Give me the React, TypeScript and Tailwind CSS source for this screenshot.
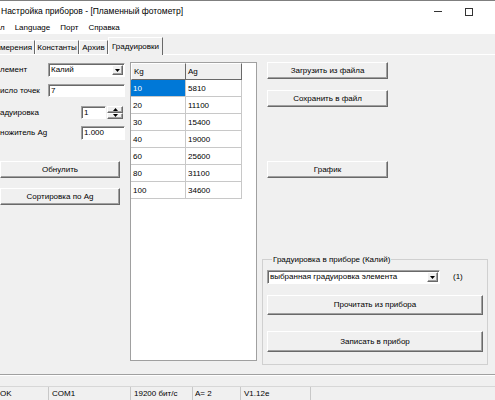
import React from "react";

const sunken =
  "bg-white border border-t-[#a0a0a0] border-l-[#a0a0a0] border-b-white border-r-white shadow-[inset_1px_1px_0_#696969]";
const raised =
  "bg-[#f0f0f0] border border-t-white border-l-white border-b-[#696969] border-r-[#696969] shadow-[inset_-1px_-1px_0_#a0a0a0]";

const rows: [string, string][] = [
  ["10", "5810"],
  ["20", "11100"],
  ["30", "15400"],
  ["40", "19000"],
  ["60", "25600"],
  ["80", "31100"],
  ["100", "34600"],
];

function Arrow({ up = false }: { up?: boolean }) {
  return (
    <svg width="5" height="3" viewBox="0 0 5 3" className={up ? "rotate-180" : ""}>
      <polygon points="0,0 5,0 2.5,3" fill="#000" />
    </svg>
  );
}

function Combo({ value, className }: { value: string; className: string }) {
  return (
    <div className={`flex items-center ${sunken} ${className}`}>
      <span className="min-w-0 flex-1 truncate pl-[2px] leading-none">{value}</span>
      <span className={`mr-[1px] flex h-[10px] w-[11px] items-center justify-center ${raised}`}>
        <Arrow />
      </span>
    </div>
  );
}

function Field({ value, className }: { value: string; className: string }) {
  return (
    <div className={`flex items-center pl-[2px] leading-none ${sunken} ${className}`}>{value}</div>
  );
}

function Btn({ children, className }: { children: React.ReactNode; className: string }) {
  return (
    <button type="button" className={`flex items-center justify-center leading-none ${raised} ${className}`}>
      {children}
    </button>
  );
}

function Tab({ label, w, active = false }: { label: string; w: string; active?: boolean }) {
  return (
    <div
      className={`flex items-center justify-center whitespace-nowrap border-t border-l border-r border-t-white border-l-white border-r-[#696969] ${w} ${
        active ? "relative z-10 -mb-px h-[18px] bg-[#f0f0f0]" : "h-[14px]"
      }`}
    >
      {label}
    </div>
  );
}

export default function App() {
  return (
    <div className="flex h-[400px] w-[495px] flex-col overflow-hidden bg-[#f0f0f0] font-['Liberation_Sans',Arial,sans-serif] text-[8px] text-black">
      {/* title bar */}
      <div className="flex h-[22px] shrink-0 items-center border-t border-[#7f7f7f] bg-white">
        <span className="pl-[1px] text-[8.5px] leading-none">Настройка приборов - [Пламенный фотометр]</span>
        <div className="ml-auto mr-[22px] flex items-center gap-[23px]">
          <div className="h-px w-[8px] bg-[#333]" />
          <div className="h-[8px] w-[8px] border border-[#333]" />
        </div>
      </div>

      {/* menu (window is cut on the left, so only the visible tail of "Файл" shows) */}
      <div className="flex h-[12px] shrink-0 items-center gap-[10px] bg-white leading-none">
        <span>л</span>
        <span>Language</span>
        <span>Порт</span>
        <span>Справка</span>
      </div>

      {/* tabs */}
      <div className="flex h-[21px] shrink-0 items-end border-b border-white">
        <div className="flex h-[14px] w-[35px] items-center justify-end whitespace-nowrap border-t border-r border-t-white border-r-[#696969] pr-[2px]">
          мерения
        </div>
        <Tab label="Константы" w="w-[44px]" />
        <Tab label="Архив" w="w-[29px]" />
        <Tab label="Градуировки" w="w-[55px]" active />
      </div>

      {/* page */}
      <div className="flex h-[319px] shrink-0">
        <div className="flex w-[125px] shrink-0 flex-col">
          <div className="mt-[8px] flex h-[14px] items-center">
            <span className="flex-1 whitespace-nowrap">лемент</span>
            <Combo value="Калий" className="h-[14px] w-[77px]" />
          </div>
          <div className="mt-[7px] flex h-[13px] items-center">
            <span className="flex-1 whitespace-nowrap">исло точек</span>
            <Field value="7" className="h-[13px] w-[77px]" />
          </div>
          <div className="mt-[9px] flex h-[13px] items-center">
            <span className="flex-1 whitespace-nowrap">адуировка</span>
            <Field value="1" className="h-[13px] w-[25px]" />
            <div className="ml-[1px] mr-[2px] flex h-[13px] w-[16px] flex-col">
              <div className={`flex flex-1 items-center justify-center ${raised}`}>
                <Arrow up />
              </div>
              <div className={`flex flex-1 items-center justify-center ${raised}`}>
                <Arrow />
              </div>
            </div>
          </div>
          <div className="mt-[7px] flex h-[14px] items-center">
            <span className="flex-1 whitespace-nowrap">ножитель Ag</span>
            <Field value="1.000" className="h-[14px] w-[44px]" />
          </div>
          <Btn className="mt-[21px] h-[17px] w-[120px]">Обнулить</Btn>
          <Btn className="mt-[10px] h-[17px] w-[120px]">Сортировка по Ag</Btn>
        </div>

        {/* grid */}
        <div className="ml-[5px] mt-[7px] h-[299px] w-[127px] shrink-0 border border-[#a0a0a0] bg-white">
          <div className="flex h-[17px]">
            <div className="w-[55px] border-t border-l border-r border-b border-t-white border-l-white border-r-[#696969] border-b-[#696969] bg-[#f0f0f0] pl-[2px] pt-[2px]">
              Kg
            </div>
            <div className="w-[56px] border-t border-r border-b border-t-white border-r-[#696969] border-b-[#696969] bg-[#f0f0f0] pl-[2px] pt-[2px]">
              Ag
            </div>
          </div>
          {rows.map(([kg, ag], i) => (
            <div key={kg} className="flex h-[17px]">
              <div
                className={`w-[55px] border-r border-b border-[#c8c8c8] pl-[2px] pt-[3px] ${
                  i === 0 ? "bg-[#0078d7] text-white" : ""
                }`}
              >
                {kg}
              </div>
              <div className="w-[56px] border-r border-b border-[#c8c8c8] pl-[2px] pt-[3px]">{ag}</div>
            </div>
          ))}
        </div>

        {/* right side */}
        <div className="ml-[5px] flex w-[225px] shrink-0 flex-col">
          <Btn className="ml-[5px] mt-[7px] h-[17px] w-[121px]">Загрузить из файла</Btn>
          <Btn className="ml-[5px] mt-[11px] h-[17px] w-[121px]">Сохранить в файл</Btn>
          <Btn className="ml-[5px] mt-[54px] h-[17px] w-[121px]">График</Btn>

          <fieldset className="mt-[77px] h-[110px] border border-[#d0d0d0] px-[4px]">
            <legend className="ml-[5px] px-[1px] leading-[9px]">Градуировка в приборе (Калий)</legend>
            <div className="mt-[6px] flex items-center">
              <Combo value="выбранная градуировка элемента" className="h-[14px] w-[173px]" />
              <span className="ml-[13px]">(1)</span>
            </div>
            <Btn className="mt-[11px] h-[20px] w-[216px]">Прочитать из прибора</Btn>
            <Btn className="mt-[16px] h-[21px] w-[216px]">Записать в прибор</Btn>
          </fieldset>
        </div>
      </div>

      {/* separator */}
      <div className="h-[2px] shrink-0 border-t border-b border-t-[#a0a0a0] border-b-white" />
      <div className="h-[10px] shrink-0" />

      {/* status bar */}
      <div className="flex h-[14px] shrink-0 items-center border-t border-[#d7d7d7] leading-none">
        <div className="w-[48px]">OK</div>
        <div className="flex h-full w-[82px] items-center border-l border-[#c8c8c8] pl-[3px]">COM1</div>
        <div className="flex h-full w-[62px] items-center border-l border-[#c8c8c8] pl-[3px]">19200 бит/с</div>
        <div className="flex h-full w-[48px] items-center border-l border-[#c8c8c8] pl-[2px]">A= 2</div>
        <div className="flex h-full w-[70px] items-center border-l border-[#c8c8c8] pl-[3px]">V1.12e</div>
        <div className="h-full flex-1 border-l border-[#c8c8c8]" />
      </div>
    </div>
  );
}
